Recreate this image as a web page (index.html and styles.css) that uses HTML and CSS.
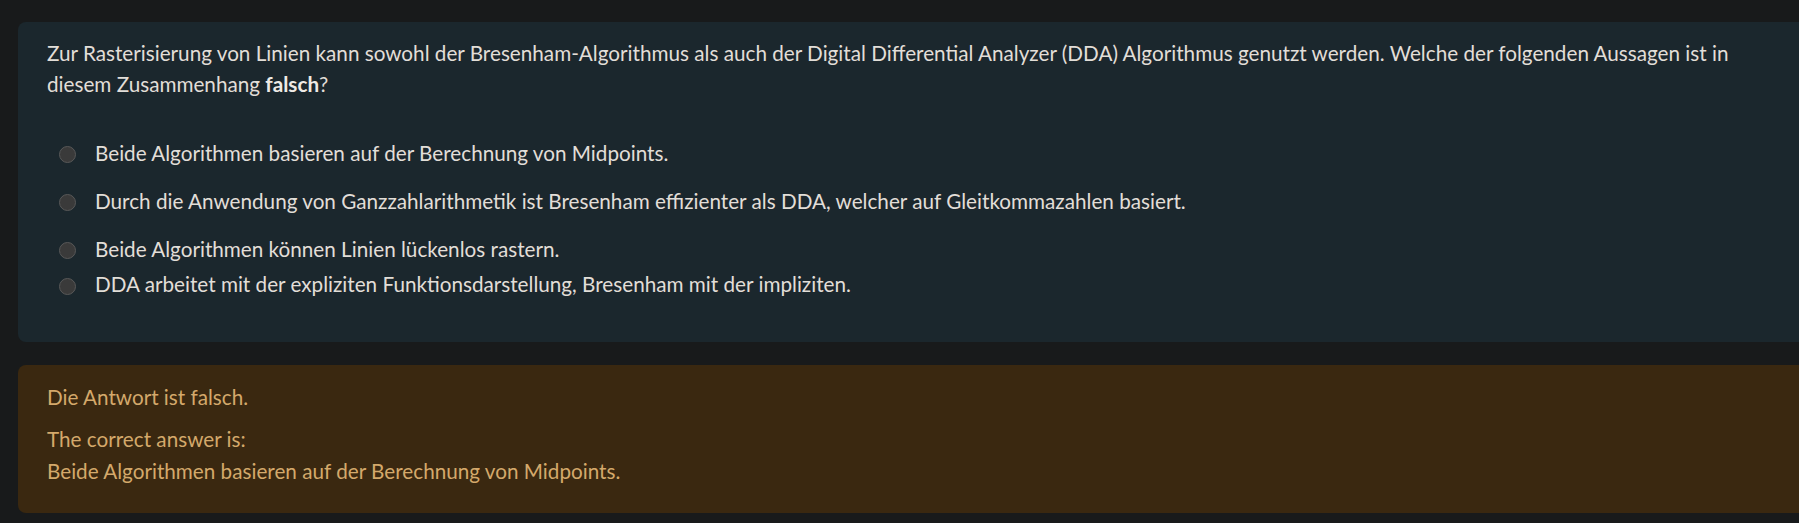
FILE: index.html
```html
<!DOCTYPE html>
<html lang="de">
<head>
<meta charset="utf-8">
<title>Frage</title>
<link rel="stylesheet" href="styles.css">
</head>
<body>
<main class="page">
  <section class="card question">
    <p class="prompt">Zur Rasterisierung von Linien kann sowohl der Bresenham-Algorithmus als auch der Digital Differential Analyzer (DDA) Algorithmus genutzt werden. Welche der folgenden Aussagen ist in diesem Zusammenhang <strong>falsch</strong>?</p>
    <div class="answers">
      <label class="option gap-lg"><span class="radio"></span><span class="label-text">Beide Algorithmen basieren auf der Berechnung von Midpoints.</span></label>
      <label class="option gap-lg"><span class="radio"></span><span class="label-text">Durch die Anwendung von Ganzzahlarithmetik ist Bresenham effizienter als DDA, welcher auf Gleitkommazahlen basiert.</span></label>
      <label class="option gap-sm"><span class="radio"></span><span class="label-text">Beide Algorithmen können Linien lückenlos rastern.</span></label>
      <label class="option"><span class="radio"></span><span class="label-text">DDA arbeitet mit der expliziten Funktionsdarstellung, Bresenham mit der impliziten.</span></label>
    </div>
  </section>
  <section class="card feedback">
    <p class="verdict">Die Antwort ist falsch.</p>
    <p class="right-answer">The correct answer is:<br>Beide Algorithmen basieren auf der Berechnung von Midpoints.</p>
  </section>
</main>
</body>
</html>
```
FILE: styles.css
```css
html, body {
  margin: 0;
  padding: 0;
  background: #181a1b;
  overflow: hidden;
}
body {
  font-family: "Lato", "Noto Sans", sans-serif;
  font-size: 20.7px;
  color: #e2ded8;
}
.page {
  display: flex;
  flex-direction: column;
  gap: 23px;
  padding: 22px 0 0 18px;
  margin-right: -12px;
}
.card {
  border-radius: 8px;
  padding: 0 29px;
}
.question {
  background: #1b272d;
  padding-top: 16px;
  padding-bottom: 42px;
}
.prompt {
  margin: 0;
  line-height: 30.7px;
  padding-right: 40px;
}
.prompt strong {
  font-weight: 700;
  color: #eeeae5;
}
.answers {
  display: flex;
  flex-direction: column;
  margin-top: 38.5px;
}
.option {
  display: flex;
  align-items: center;
  line-height: 30.5px;
}
.option.gap-lg { margin-bottom: 17.5px; }
.option.gap-sm { margin-bottom: 5px; }
.radio {
  flex: none;
  box-sizing: border-box;
  width: 17px;
  height: 17px;
  border-radius: 50%;
  background: #3a3a3a;
  border: 1.5px solid #585858;
  margin: 3px 19px 0 12px;
}
.feedback {
  background: #3a2810;
  color: #d4a96b;
  padding-top: 17px;
  padding-bottom: 26px;
}
.verdict {
  margin: 0 0 11px;
  line-height: 31px;
}
.right-answer {
  margin: 0;
  line-height: 31.7px;
}
```
